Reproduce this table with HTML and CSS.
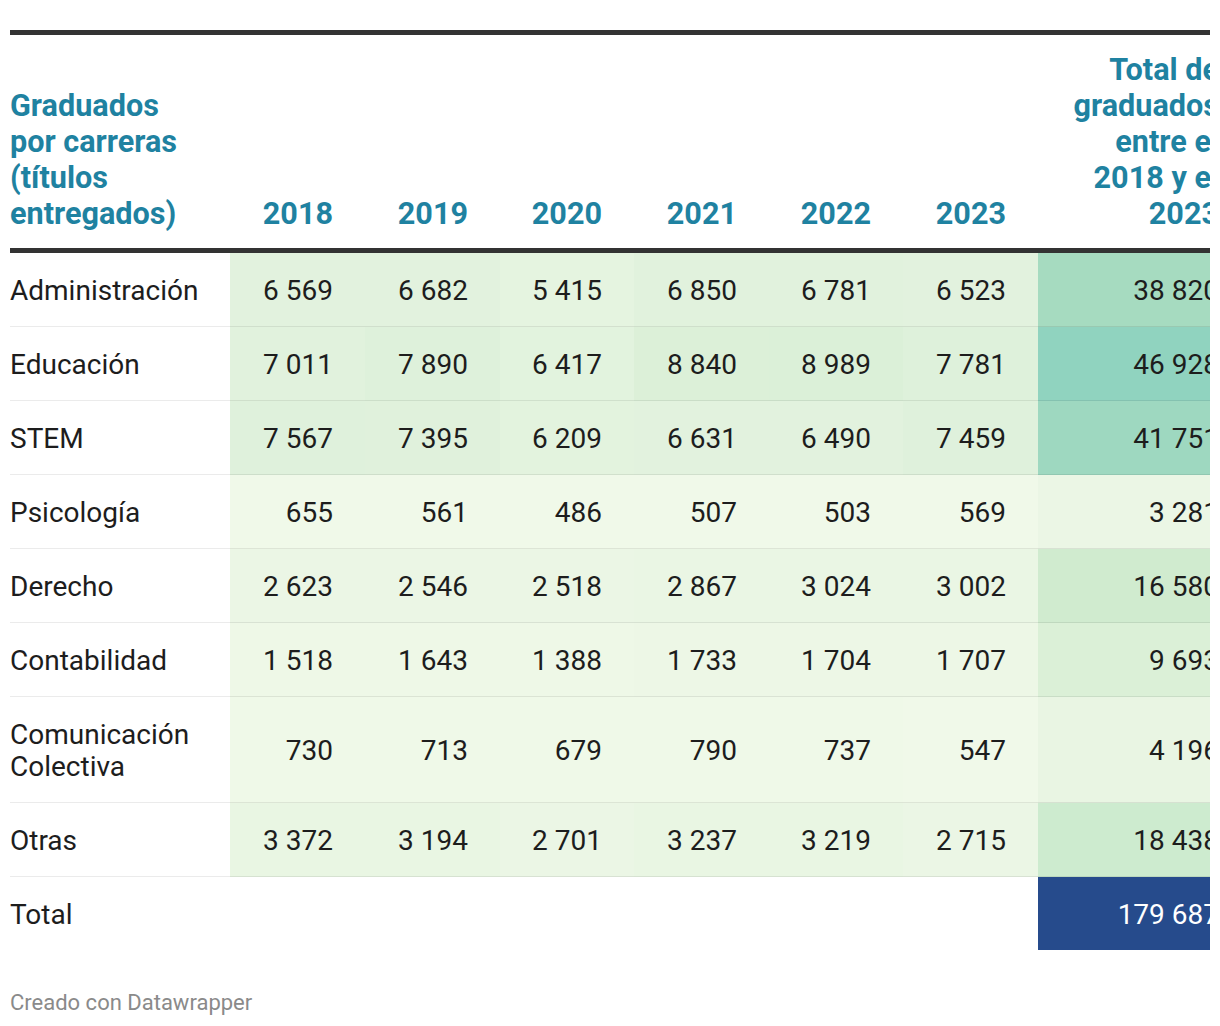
FILE: index.html
```html
<!DOCTYPE html>
<html lang="es">
<head>
<meta charset="utf-8">
<title>Graduados por carreras</title>
<link rel="stylesheet" href="styles.css">
</head>
<body>
<div class="chart">
  <div class="table-wrap">
    <table class="heat">
      <colgroup>
        <col class="c-label">
        <col class="c-y135"><col class="c-y135"><col class="c-y134"><col class="c-y135"><col class="c-y134"><col class="c-y135">
        <col class="c-total">
      </colgroup>
      <thead>
        <tr>
          <th class="lbl">Graduados por carreras (títulos entregados)</th>
          <th>2018</th><th>2019</th><th>2020</th><th>2021</th><th>2022</th><th>2023</th>
          <th class="tot">Total de graduados entre el 2018 y el 2023</th>
        </tr>
      </thead>
      <tbody>
        <tr>
          <td class="lbl">Administración</td>
          <td style="background:#e2f2de">6&nbsp;569</td><td style="background:#e2f2de">6&nbsp;682</td><td style="background:#e5f4e0">5&nbsp;415</td><td style="background:#e1f2dd">6&nbsp;850</td><td style="background:#e1f2dd">6&nbsp;781</td><td style="background:#e2f2de">6&nbsp;523</td>
          <td class="tot" style="background:#a6dbc0">38&nbsp;820</td>
        </tr>
        <tr>
          <td class="lbl">Educación</td>
          <td style="background:#e1f2dd">7&nbsp;011</td><td style="background:#def1db">7&nbsp;890</td><td style="background:#e2f3de">6&nbsp;417</td><td style="background:#dcf0d8">8&nbsp;840</td><td style="background:#dbf0d8">8&nbsp;989</td><td style="background:#def1db">7&nbsp;781</td>
          <td class="tot" style="background:#90d3bf">46&nbsp;928</td>
        </tr>
        <tr>
          <td class="lbl">STEM</td>
          <td style="background:#dff1dc">7&nbsp;567</td><td style="background:#e0f1dc">7&nbsp;395</td><td style="background:#e3f3de">6&nbsp;209</td><td style="background:#e2f2de">6&nbsp;631</td><td style="background:#e2f2de">6&nbsp;490</td><td style="background:#dff1dc">7&nbsp;459</td>
          <td class="tot" style="background:#9ed8c0">41&nbsp;751</td>
        </tr>
        <tr>
          <td class="lbl">Psicología</td>
          <td style="background:#f0f9e9">655</td><td style="background:#f0f9e9">561</td><td style="background:#f0f9e9">486</td><td style="background:#f0f9e9">507</td><td style="background:#f0f9e9">503</td><td style="background:#f0f9e9">569</td>
          <td class="tot" style="background:#ebf6e5">3&nbsp;281</td>
        </tr>
        <tr>
          <td class="lbl">Derecho</td>
          <td style="background:#ebf6e5">2&nbsp;623</td><td style="background:#ebf6e5">2&nbsp;546</td><td style="background:#ebf6e5">2&nbsp;518</td><td style="background:#eaf6e4">2&nbsp;867</td><td style="background:#eaf6e4">3&nbsp;024</td><td style="background:#eaf6e4">3&nbsp;002</td>
          <td class="tot" style="background:#d0ebcf">16&nbsp;580</td>
        </tr>
        <tr>
          <td class="lbl">Contabilidad</td>
          <td style="background:#eef8e7">1&nbsp;518</td><td style="background:#eef8e7">1&nbsp;643</td><td style="background:#eef8e7">1&nbsp;388</td><td style="background:#edf7e6">1&nbsp;733</td><td style="background:#edf7e6">1&nbsp;704</td><td style="background:#edf7e6">1&nbsp;707</td>
          <td class="tot" style="background:#dbf0d7">9&nbsp;693</td>
        </tr>
        <tr>
          <td class="lbl">Comunicación Colectiva</td>
          <td style="background:#eff9e8">730</td><td style="background:#eff9e8">713</td><td style="background:#eff9e8">679</td><td style="background:#eff9e8">790</td><td style="background:#eff9e8">737</td><td style="background:#f0f9e9">547</td>
          <td class="tot" style="background:#e9f5e3">4&nbsp;196</td>
        </tr>
        <tr>
          <td class="lbl">Otras</td>
          <td style="background:#e9f6e3">3&nbsp;372</td><td style="background:#e9f6e3">3&nbsp;194</td><td style="background:#ebf6e5">2&nbsp;701</td><td style="background:#e9f6e3">3&nbsp;237</td><td style="background:#e9f6e3">3&nbsp;219</td><td style="background:#ebf6e5">2&nbsp;715</td>
          <td class="tot" style="background:#cdebcf">18&nbsp;438</td>
        </tr>
        <tr class="total-row">
          <td class="lbl">Total</td>
          <td></td><td></td><td></td><td></td><td></td><td></td>
          <td class="tot grand">179&nbsp;687</td>
        </tr>
      </tbody>
    </table>
  </div>
  <p class="credit">Creado con Datawrapper</p>
</div>
</body>
</html>
```

FILE: styles.css
```css
html, body {
  margin: 0;
  padding: 0;
  background: #ffffff;
}

body {
  font-family: Roboto, "Liberation Sans", Arial, sans-serif;
  color: #1d1d1d;
}

.chart {
  padding: 30px 10px 0 10px;
}

.table-wrap {
  overflow: hidden;
  width: 1200px;
}

.heat {
  border-collapse: separate;
  border-spacing: 0;
  table-layout: fixed;
  width: 1241px;
}

.c-label { width: 220px; }
.c-y135 { width: 135px; }
.c-y134 { width: 134px; }
.c-total { width: 213px; }

.heat th {
  font-weight: 700;
  font-size: 30.6px;
  line-height: 36px;
  color: #1f82a1;
  text-align: right;
  vertical-align: bottom;
  padding: 17px 32px 16px 0;
  border-top: 5px solid #333333;
  border-bottom: 5px solid #333333;
}

.heat th.lbl {
  text-align: left;
  padding-right: 30px;
}

.heat th.tot {
  padding-left: 16px;
}

.heat td {
  font-size: 28px;
  line-height: 32px;
  text-align: right;
  vertical-align: middle;
  padding: 22px 32px 19px 0;
  border-bottom: 1px solid rgba(0, 0, 0, 0.08);
  white-space: nowrap;
}

.heat td.lbl {
  text-align: left;
  white-space: normal;
  padding-right: 20px;
}

.heat tr.total-row td {
  border-bottom: none;
  padding-top: 22px;
  padding-bottom: 19px;
}

.heat td.grand {
  background: #264b8c;
  color: #ffffff;
}

.credit {
  margin: 41px 0 0 0;
  font-size: 22px;
  line-height: 24px;
  color: #8a8a8a;
}
```
